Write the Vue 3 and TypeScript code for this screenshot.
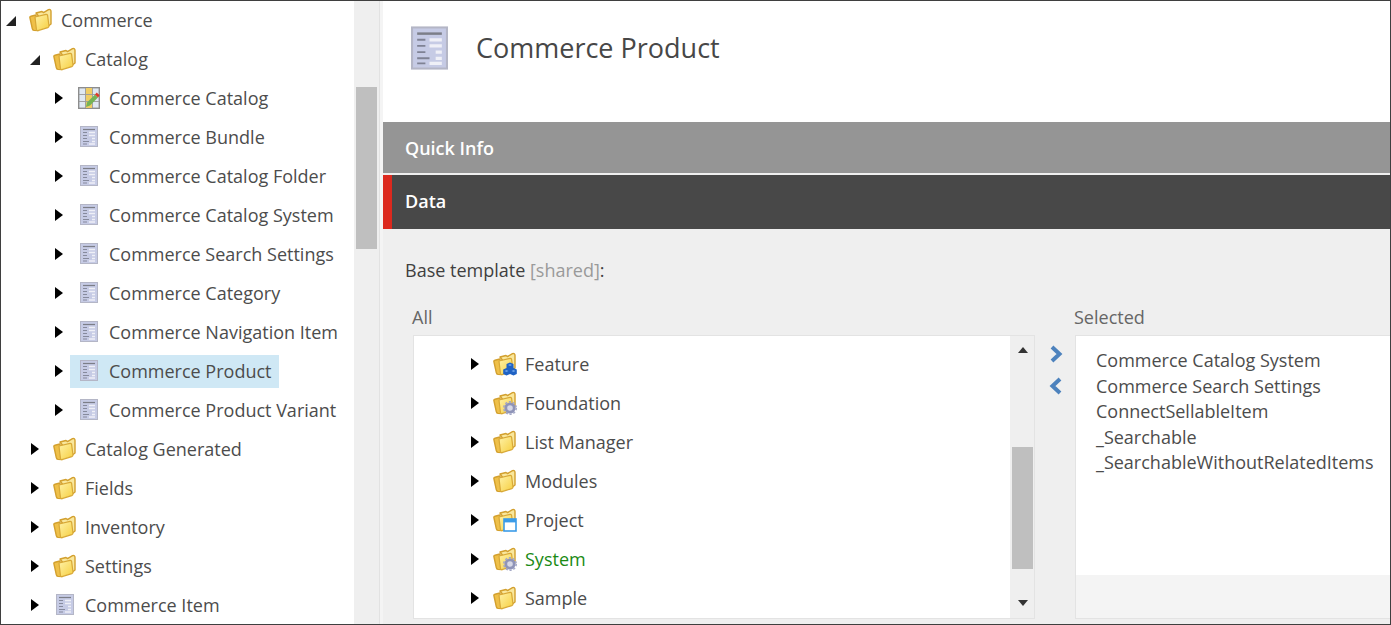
<script setup lang="ts">
type IconKind = 'folder' | 'template' | 'catalog' | 'feature' | 'gear' | 'project'

interface TreeRow {
  label: string
  depth: number
  icon: IconKind
  open?: boolean
  selected?: boolean
  green?: boolean
}

const treeRows: TreeRow[] = [
  { label: 'Commerce', depth: 0, icon: 'folder', open: true },
  { label: 'Catalog', depth: 1, icon: 'folder', open: true },
  { label: 'Commerce Catalog', depth: 2, icon: 'catalog' },
  { label: 'Commerce Bundle', depth: 2, icon: 'template' },
  { label: 'Commerce Catalog Folder', depth: 2, icon: 'template' },
  { label: 'Commerce Catalog System', depth: 2, icon: 'template' },
  { label: 'Commerce Search Settings', depth: 2, icon: 'template' },
  { label: 'Commerce Category', depth: 2, icon: 'template' },
  { label: 'Commerce Navigation Item', depth: 2, icon: 'template' },
  { label: 'Commerce Product', depth: 2, icon: 'template', selected: true },
  { label: 'Commerce Product Variant', depth: 2, icon: 'template' },
  { label: 'Catalog Generated', depth: 1, icon: 'folder' },
  { label: 'Fields', depth: 1, icon: 'folder' },
  { label: 'Inventory', depth: 1, icon: 'folder' },
  { label: 'Settings', depth: 1, icon: 'folder' },
  { label: 'Commerce Item', depth: 1, icon: 'template' },
]

const allRows: TreeRow[] = [
  { label: 'Feature', depth: 0, icon: 'feature' },
  { label: 'Foundation', depth: 0, icon: 'gear' },
  { label: 'List Manager', depth: 0, icon: 'folder' },
  { label: 'Modules', depth: 0, icon: 'folder' },
  { label: 'Project', depth: 0, icon: 'project' },
  { label: 'System', depth: 0, icon: 'gear', green: true },
  { label: 'Sample', depth: 0, icon: 'folder' },
]

const selectedItems = [
  'Commerce Catalog System',
  'Commerce Search Settings',
  'ConnectSellableItem',
  '_Searchable',
  '_SearchableWithoutRelatedItems',
]
</script>

<template>
  <svg class="defs" width="0" height="0" aria-hidden="true">
    <defs>
      <linearGradient id="fold" x1="0" y1="0" x2="1" y2="1">
        <stop offset="0" stop-color="#fff2a8" />
        <stop offset="1" stop-color="#f6cf40" />
      </linearGradient>
      <symbol id="i-folder" viewBox="0 0 24 24">
        <path d="M8 5 L14 3.5 L15.5 4.6 L20.5 1.6 Q23 1 23 3.5 L23 16 L19 19 Z" fill="#f9e79c" stroke="#d3a02e" stroke-width="1.4" stroke-linejoin="round" />
        <path d="M2 10 Q1.4 8.6 3 8.2 L8 7 L10 22.6 L6 22.4 Q4.6 22.2 4.3 20.6 Z" fill="#efc049" stroke="#d3a02e" stroke-width="1.4" stroke-linejoin="round" />
        <path d="M7 9 L18 6.4 Q19.3 6.3 19.6 7.4 L21 18 Q21 19.2 19.8 19.6 L10 22.6 Q8.6 22.8 8.4 21.4 Z" fill="url(#fold)" stroke="#d8a836" stroke-width="1.2" stroke-linejoin="round" />
      </symbol>
      <symbol id="i-template" viewBox="0 0 18 21">
        <rect x="0.5" y="0.5" width="17" height="20" fill="#c6cbe5" stroke="#b4b6c6" />
        <path d="M3 3.5h12" stroke="#7c7e88" stroke-width="1.2" />
        <path d="M3 6.5h4M3 9.5h4M3 12.5h4M3 15.5h6M3 18h4" stroke="#7f8294" stroke-width="0.9" />
        <path d="M9 6.5h6M9 9.5h6M12 12.5h3M12 15.5h3M9 18h6" stroke="#eff0f7" stroke-width="1.6" />
      </symbol>
      <symbol id="i-catalog" viewBox="0 0 22 22">
        <rect x="0.7" y="0.7" width="20.6" height="20.6" fill="#dfe8f2" stroke="#8d8d8d" stroke-width="1.4" />
        <rect x="7.5" y="1" width="6.5" height="20" fill="#f0cd63" />
        <path d="M1 7.5h20M1 14.5h20M7.5 1v20M14.5 1v20" stroke="#9a9a9a" stroke-width="0.9" />
        <path d="M8 20 L9 15.5 L17 7.5 L20 10.5 L12 18.5 Z" fill="#74b356" />
        <path d="M17 7.5 L18.8 5.5 L21.6 8.5 L20 10.5 Z" fill="#dc3b2a" />
      </symbol>
    </defs>
  </svg>

  <div class="screen">
    <aside class="tree">
      <div v-for="row in treeRows" :key="row.label" class="row" :class="'depth-' + row.depth">
        <span class="toggle" :class="{ open: row.open }"></span>
        <span class="node" :class="{ selected: row.selected }">
          <span class="icon-slot">
            <svg v-if="row.icon === 'folder'" class="ic-folder"><use href="#i-folder" /></svg>
            <svg v-else-if="row.icon === 'template'" class="ic-template"><use href="#i-template" /></svg>
            <svg v-else class="ic-catalog"><use href="#i-catalog" /></svg>
          </span>
          <span class="label">{{ row.label }}</span>
        </span>
      </div>
    </aside>

    <div class="tree-scroll"><div class="tree-thumb"></div></div>
    <div class="splitter"></div>

    <main class="panel">
      <header class="head">
        <svg class="head-icon"><use href="#i-template" /></svg>
        <h1>Commerce Product</h1>
      </header>

      <div class="section quick">Quick Info</div>
      <div class="section data">Data</div>

      <div class="body">
        <div class="field-title">Base template <span class="shared">[shared]</span>:</div>

        <div class="columns">
          <div class="col-all">
            <div class="col-label">All</div>
            <div class="box">
              <div class="box-list">
                <div v-for="row in allRows" :key="row.label" class="row">
                  <span class="toggle"></span>
                  <span class="node">
                    <span class="icon-slot">
                      <svg class="ic-folder"><use href="#i-folder" /></svg>
                      <svg v-if="row.icon === 'feature'" class="badge" viewBox="0 0 14 14">
                        <path d="M7 0.5 L10.5 2 V6 L13.8 7.6 V12 L10.5 13.6 L7 12 L3.5 13.6 L0.2 12 V7.6 L3.5 6 V2 Z" fill="#1f62c4" />
                        <path d="M7 2 L9 3 L7 4 L5 3 Z M3.5 8 L5.5 9 L3.5 10 L1.5 9 Z M10.5 8 L12.5 9 L10.5 10 L8.5 9 Z" fill="#6ea4ea" />
                      </svg>
                      <svg v-else-if="row.icon === 'gear'" class="badge" viewBox="0 0 14 14">
                        <circle cx="7" cy="7" r="4.2" fill="#d6d8e6" stroke="#8f94b8" stroke-width="2.8" />
                        <circle cx="7" cy="7" r="6.2" fill="none" stroke="#a4a8c6" stroke-width="1.6" stroke-dasharray="2.2 1.7" />
                      </svg>
                      <svg v-else-if="row.icon === 'project'" class="badge" viewBox="0 0 14 14">
                        <rect x="1" y="1" width="12" height="12" fill="#fff" stroke="#3b9be8" stroke-width="1.6" />
                        <rect x="1" y="1" width="12" height="3.4" fill="#3b9be8" />
                      </svg>
                    </span>
                    <span class="label" :class="{ green: row.green }">{{ row.label }}</span>
                  </span>
                </div>
              </div>
              <div class="box-scroll">
                <span class="arrow up"></span>
                <div class="box-thumb"></div>
                <span class="arrow down"></span>
              </div>
            </div>
          </div>

          <div class="shuttle">
            <svg viewBox="0 0 14 18"><path d="M3 2 L10.5 9 L3 16" fill="none" stroke="#4d82bd" stroke-width="4" /></svg>
            <svg viewBox="0 0 14 18"><path d="M11 2 L3.5 9 L11 16" fill="none" stroke="#4d82bd" stroke-width="4" /></svg>
          </div>

          <div class="col-selected">
            <div class="col-label sel">Selected</div>
            <div class="sel-box">
              <div class="sel-list">
                <div v-for="item in selectedItems" :key="item">{{ item }}</div>
              </div>
            </div>
          </div>
        </div>
      </div>
    </main>
  </div>
</template>

<style>
html,
body {
  margin: 0;
  overflow: hidden;
}
</style>

<style scoped>
.defs {
  position: absolute;
}

.screen {
  box-sizing: border-box;
  width: 1391px;
  height: 625px;
  display: flex;
  border: 1px solid #3f3f3f;
  overflow: hidden;
  background: #fff;
  font-family: "Open Sans", "Noto Sans", sans-serif;
  font-size: 18px;
  color: #4c4c4c;
}

.tree {
  width: 353px;
  flex: none;
  overflow: hidden;
}

.row {
  height: 39px;
  display: flex;
  align-items: center;
  white-space: nowrap;
}

.depth-0 { padding-left: 5px; }
.depth-1 { padding-left: 29px; }
.depth-2 { padding-left: 53px; }

.toggle {
  flex: none;
  width: 0;
  height: 0;
  margin: 0 7px 2px 1px;
  border-style: solid;
  border-width: 6.5px 0 6.5px 8px;
  border-color: transparent transparent transparent #000;
}

.toggle.open {
  width: 0;
  border-width: 0 0 10px 10px;
  border-color: transparent transparent #222 transparent;
  margin: 0 6px 0 0;
}

.node {
  display: flex;
  align-items: center;
  height: 33px;
  padding: 0 8px;
}

.node.selected {
  background: #cfe8f5;
}

.icon-slot {
  position: relative;
  display: flex;
  align-items: center;
  justify-content: center;
  width: 23px;
  height: 24px;
  margin: 0 8px 2px 0;
}

.label {
  margin-bottom: 2px;
}

.ic-folder {
  width: 24px;
  height: 24px;
  flex: none;
  margin-right: 4px;
}

.ic-template {
  width: 18px;
  height: 21px;
  flex: none;
  margin-right: 2px;
}

.ic-catalog {
  width: 22px;
  height: 22px;
  flex: none;
  margin-right: 2px;
}

.badge {
  position: absolute;
  right: 0;
  bottom: 0;
  width: 14px;
  height: 14px;
}

.label.green {
  color: #1a8a14;
}

.tree-scroll {
  width: 25px;
  flex: none;
  box-sizing: border-box;
  padding: 86px 2px 0;
  background: #efefef;
}

.tree-thumb {
  height: 162px;
  background: #bfbfbf;
}

.splitter {
  width: 4px;
  flex: none;
  background: #f4f4f4;
  border-left: 1px solid #e2e2e2;
  box-sizing: border-box;
}

.panel {
  flex: 1;
  min-width: 0;
  display: flex;
  flex-direction: column;
  background: #efefef;
}

.head {
  height: 121px;
  flex: none;
  display: flex;
  align-items: flex-start;
  background: #fff;
  padding: 24px 0 0 28px;
  box-sizing: border-box;
}

.head-icon {
  width: 37px;
  height: 46px;
  flex: none;
}

.head h1 {
  margin: 3px 0 0 28px;
  font-size: 27px;
  line-height: 39px;
  font-weight: 400;
  color: #474747;
}

.section {
  flex: none;
  color: #fff;
  font-weight: 600;
  font-size: 18px;
  display: flex;
  align-items: center;
  box-sizing: border-box;
}

.quick {
  height: 51px;
  padding-left: 22px;
  background: #959595;
}

.data {
  height: 54px;
  margin-top: 2px;
  padding: 0 0 2px 13px;
  background: #484848;
  border-left: 9px solid #dc291e;
}

.body {
  flex: 1;
  min-height: 0;
  padding: 25px 0 0 22px;
}

.field-title {
  line-height: 32px;
  color: #3f3f3f;
}

.shared {
  color: #9a9a9a;
}

.columns {
  display: flex;
  margin-top: 15px;
}

.col-label {
  margin-left: 7px;
  height: 34px;
  line-height: 32px;
  color: #666;
}

.col-label.sel {
  margin-left: -1px;
}

.box {
  margin-left: 8px;
  width: 622px;
  height: 284px;
  box-sizing: border-box;
  display: flex;
  background: #fff;
  border: 1px solid #e3e3e3;
  overflow: hidden;
}

.box-list {
  flex: 1;
  padding: 9px 0 0 56px;
}

.box-scroll {
  width: 24px;
  flex: none;
  box-sizing: border-box;
  background: #efefef;
  padding: 0 1px 0 2px;
  display: flex;
  flex-direction: column;
  align-items: center;
}

.box-thumb {
  width: 100%;
  height: 122px;
  margin-top: 94px;
  background: #bfbfbf;
}

.arrow {
  width: 0;
  height: 0;
  border-style: solid;
  border-color: transparent;
}

.arrow.up {
  margin-top: 11px;
  border-width: 0 5.5px 6px;
  border-bottom-color: #333;
}

.arrow.down {
  margin-top: 31px;
  border-width: 6px 5.5px 0;
  border-top-color: #333;
}

.shuttle {
  width: 40px;
  flex: none;
  padding-top: 44px;
  display: flex;
  flex-direction: column;
  align-items: center;
  gap: 14px;
}

.shuttle svg {
  width: 14px;
  height: 18px;
  margin-left: 2px;
}

.col-selected {
  flex: 1;
  min-width: 0;
}

.sel-box {
  height: 284px;
  box-sizing: border-box;
  background: #f4f4f4;
  border: 1px solid #e3e3e3;
  border-right: none;
  overflow: hidden;
}

.sel-list {
  height: 239px;
  box-sizing: border-box;
  background: #fff;
  padding: 12px 0 0 20px;
  line-height: 25.5px;
  white-space: nowrap;
}
</style>
